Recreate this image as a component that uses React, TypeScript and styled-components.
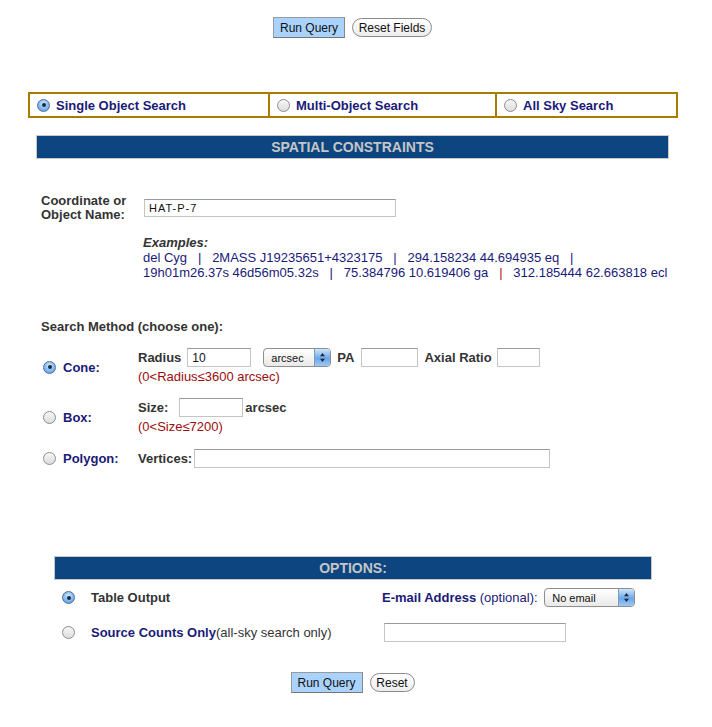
import React from "react";
import styled, { createGlobalStyle, css } from "styled-components";

const Global = createGlobalStyle`
  html, body { margin: 0; padding: 0; background: #fff; }
  body { font-family: "Liberation Sans", Arial, Helvetica, sans-serif; font-size: 13px; color: #333; }
`;

const NAVY = "#1a1a78";
const GOLD = "#a87c00";
const HEAD = "#0c4580";

const Page = styled.div`
  width: 712px;
  min-height: 727px;
  padding-top: 17px;
  box-sizing: border-box;
`;

const ButtonBar = styled.div<{ $top?: number }>`
  display: flex;
  justify-content: center;
  align-items: center;
  gap: 7px;
  padding-right: 7px;
  margin-top: ${(p) => p.$top ?? 0}px;
`;

const PrimaryButton = styled.button`
  width: 72px;
  height: 21px;
  padding: 0;
  background: #a9d3fd;
  border: 1px solid #9a9a9a;
  border-bottom-color: #777;
  border-right-color: #888;
  font-family: "Liberation Sans", Arial, sans-serif;
  font-size: 12px;
  color: #111;
  box-sizing: border-box;
`;

const PillButton = styled.button<{ $w: number }>`
  width: ${(p) => p.$w}px;
  height: 19px;
  padding: 0;
  background: linear-gradient(#ffffff, #ececec);
  border: 1px solid #8a8a8a;
  border-radius: 10px;
  font-family: "Liberation Sans", Arial, sans-serif;
  font-size: 12px;
  color: #111;
  box-sizing: border-box;
`;

const TabBar = styled.div`
  margin: 54px 0 0 28px;
  width: 650px;
  display: grid;
  grid-template-columns: 240px 227px 183px;
  border: 2px solid ${GOLD};
  box-sizing: border-box;
  height: 26px;
`;

const Tab = styled.div<{ $last?: boolean }>`
  display: flex;
  align-items: center;
  gap: 6px;
  padding-left: 7px;
  border-right: ${(p) => (p.$last ? "none" : `2px solid ${GOLD}`)};
  font-weight: bold;
  font-size: 13px;
  color: ${NAVY};
`;

const Radio = styled.span<{ $on?: boolean }>`
  display: inline-block;
  position: relative;
  width: 13px;
  height: 13px;
  border-radius: 50%;
  box-sizing: border-box;
  flex: none;
  ${(p) =>
    p.$on
      ? css`
          border: 1px solid #4f6f96;
          background: radial-gradient(circle at 50% 35%, #d6ebff 0%, #8cc1f5 45%, #4d95e3 100%);
          &::after {
            content: "";
            position: absolute;
            left: 3.5px;
            top: 3.5px;
            width: 4px;
            height: 4px;
            border-radius: 50%;
            background: #1c2a3a;
          }
        `
      : css`
          border: 1px solid #8d8d8d;
          background: linear-gradient(#f7f7f7, #dcdcdc);
        `}
`;

const SectionHeader = styled.div<{ $left: number; $width: number; $top: number }>`
  margin: ${(p) => p.$top}px 0 0 ${(p) => p.$left}px;
  width: ${(p) => p.$width}px;
  height: 22px;
  box-sizing: border-box;
  background: ${HEAD};
  outline: 1px solid #c9c9c9;
  display: flex;
  align-items: center;
  justify-content: center;
  font-weight: bold;
  font-size: 14px;
  color: #c6c6c6;
`;

const CoordRow = styled.div`
  margin: 36px 0 0 41px;
  display: grid;
  grid-template-columns: 103px 252px;
  align-items: start;
`;

const BoldLabel = styled.div`
  font-weight: bold;
  font-size: 13px;
  line-height: 14px;
  color: #333;
`;

const TextInput = styled.input<{ $w: number; $ml?: number }>`
  width: ${(p) => p.$w}px;
  height: 19px;
  margin-left: ${(p) => p.$ml ?? 0}px;
  box-sizing: border-box;
  border: 1px solid #c4c4c4;
  border-top-color: #999;
  padding: 0 4px;
  font-family: "Liberation Sans", Arial, sans-serif;
  font-size: 12px;
  color: #111;
  background: #fff;
  outline: none;
`;

const CoordInput = styled(TextInput)`
  height: 18px;
  margin-top: 5px;
  font-size: 11px;
  letter-spacing: 1px;
`;

const Examples = styled.div`
  margin: 13px 0 0 143px;
  font-size: 13px;
  line-height: 15px;
  color: ${NAVY};
`;

const ExTitle = styled.div`
  font-weight: bold;
  font-style: italic;
  color: #333;
`;

const Sep = styled.span<{ $red?: boolean }>`
  color: ${(p) => (p.$red ? "#b01010" : NAVY)};
  white-space: pre;
`;

const MethodTitle = styled(BoldLabel)`
  margin: 40px 0 0 41px;
`;

const MethodRow = styled.div<{ $top: number }>`
  margin: ${(p) => p.$top}px 0 0 43px;
  display: grid;
  grid-template-columns: 20px 75px auto;
  align-items: center;
`;

const MethodName = styled.div`
  font-weight: bold;
  font-size: 13px;
  color: ${NAVY};
`;

const MethodBody = styled.div`
  display: flex;
  flex-direction: column;
`;

const FieldLine = styled.div`
  display: flex;
  align-items: center;
  height: 19px;
  font-weight: bold;
  font-size: 13px;
  color: #333;
`;

const Hint = styled.div`
  margin-top: 1px;
  font-size: 13px;
  line-height: 18px;
  color: #9b0d0d;
`;

const Popup = styled.div<{ $w: number; $ml?: number }>`
  width: ${(p) => p.$w}px;
  height: 19px;
  margin-left: ${(p) => p.$ml ?? 0}px;
  box-sizing: border-box;
  border: 1px solid #8e8e8e;
  border-radius: 4px;
  background: linear-gradient(#ffffff, #e9e9e9);
  display: flex;
  align-items: center;
  overflow: hidden;
  font-weight: normal;
  font-size: 11px;
  color: #111;
`;

const PopupText = styled.span`
  flex: 1;
  padding-left: 7px;
`;

const PopupArrows = styled.span`
  width: 15px;
  height: 100%;
  border-left: 1px solid #7b9cc4;
  background: linear-gradient(#cfe5fb, #6aa7e6 55%, #9ccaf5);
  display: flex;
  align-items: center;
  justify-content: center;
`;

const Gap = styled.span<{ $w: number }>`
  display: inline-block;
  width: ${(p) => p.$w}px;
`;

const Options = styled.div`
  margin: 0 0 0 62px;
`;

const OptRow = styled.div<{ $top: number }>`
  margin-top: ${(p) => p.$top}px;
  display: grid;
  grid-template-columns: 29px 291px auto;
  align-items: center;
  height: 19px;
  font-size: 13px;
`;

const OptText = styled.div<{ $navy?: boolean }>`
  font-weight: bold;
  color: ${(p) => (p.$navy ? NAVY : "#333")};
  span { font-weight: normal; color: #333; }
`;

const EmailCell = styled.div`
  display: flex;
  align-items: center;
  font-weight: bold;
  color: ${NAVY};
  span { font-weight: normal; white-space: pre; }
`;

const SourceInputCell = styled.div`
  padding-left: 2px;
`;

const Arrows = () => (
  <PopupArrows>
    <svg width="7" height="11" viewBox="0 0 7 11">
      <path d="M3.5 1 L6 4.2 H1 Z" fill="#1c2b44" />
      <path d="M3.5 10 L6 6.8 H1 Z" fill="#1c2b44" />
    </svg>
  </PopupArrows>
);

const S = (red?: boolean) => <Sep $red={!!red}>{"   |   "}</Sep>;

export default function App() {
  return (
    <>
      <Global />
      <Page>
        <ButtonBar>
          <PrimaryButton>Run Query</PrimaryButton>
          <PillButton $w={80}>Reset Fields</PillButton>
        </ButtonBar>

        <TabBar>
          <Tab>
            <Radio $on />
            Single Object Search
          </Tab>
          <Tab>
            <Radio />
            Multi-Object Search
          </Tab>
          <Tab $last>
            <Radio />
            All Sky Search
          </Tab>
        </TabBar>

        <SectionHeader $left={37} $width={631} $top={18}>
          SPATIAL CONSTRAINTS
        </SectionHeader>

        <CoordRow>
          <BoldLabel>
            Coordinate or
            <br />
            Object Name:
          </BoldLabel>
          <CoordInput $w={252} defaultValue="HAT-P-7" />
        </CoordRow>

        <Examples>
          <ExTitle>Examples:</ExTitle>
          <div>
            del Cyg{S()}2MASS J19235651+4323175{S()}294.158234 44.694935 eq{S()}
          </div>
          <div>
            19h01m26.37s 46d56m05.32s{S()}75.384796 10.619406 ga{S(true)}312.185444 62.663818 ecl
          </div>
        </Examples>

        <MethodTitle>Search Method (choose one):</MethodTitle>

        <MethodRow $top={14}>
          <Radio $on />
          <MethodName>Cone:</MethodName>
          <MethodBody>
            <FieldLine>
              Radius
              <TextInput $w={64} $ml={6} defaultValue="10" />
              <Popup $w={68} $ml={12}>
                <PopupText>arcsec</PopupText>
                <Arrows />
              </Popup>
              <Gap $w={6} />
              PA
              <TextInput $w={57} $ml={7} />
              <Gap $w={6} />
              Axial Ratio
              <TextInput $w={43} $ml={5} />
            </FieldLine>
            <Hint>(0&lt;Radius≤3600 arcsec)</Hint>
          </MethodBody>
        </MethodRow>

        <MethodRow $top={12}>
          <Radio />
          <MethodName>Box:</MethodName>
          <MethodBody>
            <FieldLine>
              Size:
              <TextInput $w={64} $ml={11} />
              <Gap $w={2} />
              arcsec
            </FieldLine>
            <Hint>(0&lt;Size≤7200)</Hint>
          </MethodBody>
        </MethodRow>

        <MethodRow $top={13}>
          <Radio />
          <MethodName>Polygon:</MethodName>
          <MethodBody>
            <FieldLine>
              Vertices:
              <TextInput $w={356} $ml={2} />
            </FieldLine>
          </MethodBody>
        </MethodRow>

        <SectionHeader $left={55} $width={596} $top={89}>
          OPTIONS:
        </SectionHeader>

        <Options>
          <OptRow $top={9}>
            <Radio $on />
            <OptText>Table Output</OptText>
            <EmailCell>
              E-mail Address<span> (optional): </span>
              <Popup $w={91} $ml={3}>
                <PopupText>No email</PopupText>
                <Arrows />
              </Popup>
            </EmailCell>
          </OptRow>
          <OptRow $top={16}>
            <Radio />
            <OptText $navy>
              Source Counts Only<span>(all-sky search only)</span>
            </OptText>
            <SourceInputCell>
              <TextInput $w={182} />
            </SourceInputCell>
          </OptRow>
        </Options>

        <ButtonBar $top={30}>
          <PrimaryButton>Run Query</PrimaryButton>
          <PillButton $w={45}>Reset</PillButton>
        </ButtonBar>
      </Page>
    </>
  );
}
